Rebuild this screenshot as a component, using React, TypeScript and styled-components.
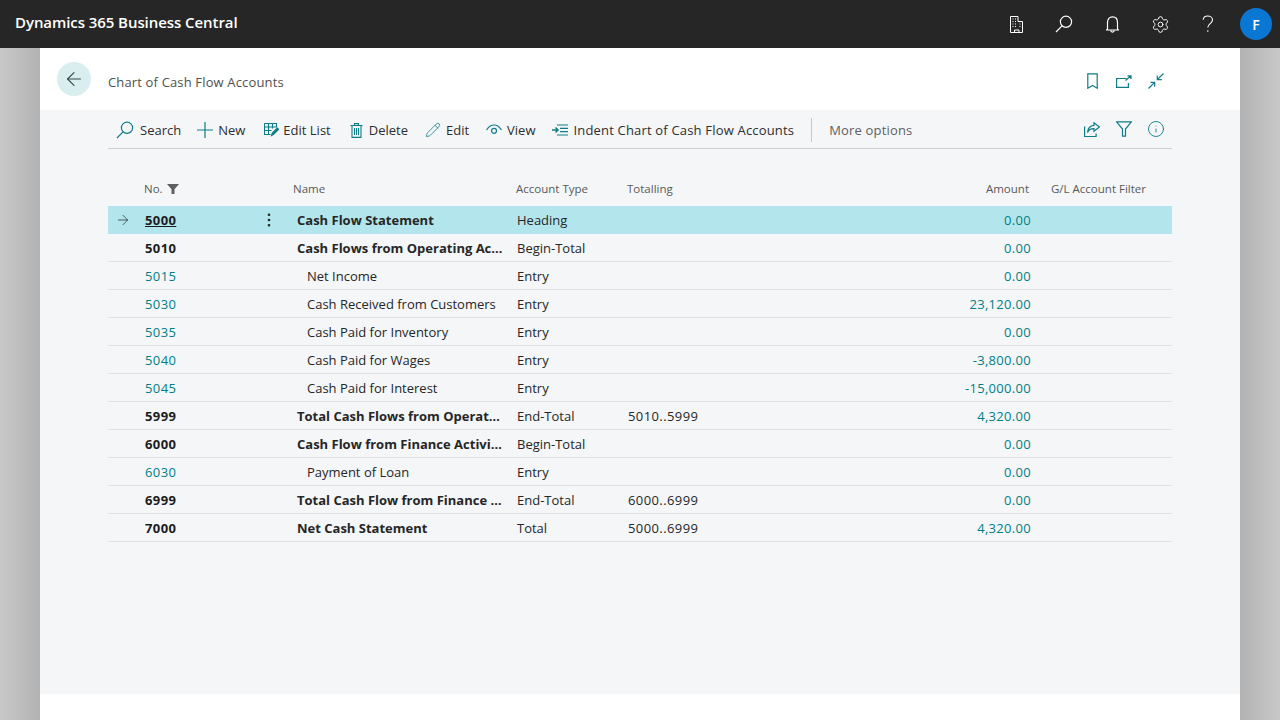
import styled, { createGlobalStyle } from 'styled-components';
import { ArrowLeft, ArrowRight, Settings, Pencil, Info, MoreVertical } from 'lucide-react';

const GlobalStyle = createGlobalStyle`
  html, body {
    margin: 0;
    padding: 0;
    height: 100%;
    overflow: hidden;
    font-family: "Open Sans", "Noto Sans", "Liberation Sans", sans-serif;
  }
  #root { height: 100%; }
  * { box-sizing: border-box; }
`;

const Page = styled.div`
  width: 1280px;
  height: 720px;
  display: flex;
  flex-direction: column;
`;

const TopBar = styled.header`
  height: 48px;
  flex: none;
  background: #262626;
  display: flex;
  align-items: center;
  padding: 0 8px 0 15px;
  color: #fff;
`;

const Brand = styled.div`
  flex: 1;
  margin-top: -4px;
  font-size: 15px;
  font-weight: 600;
  letter-spacing: -0.07px;
`;

const TopIcon = styled.div`
  width: 48px;
  height: 48px;
  display: flex;
  align-items: center;
  justify-content: center;
  color: #fff;
`;

const Avatar = styled.div`
  width: 32px;
  height: 32px;
  margin-left: 8px;
  border-radius: 50%;
  background: #0a78d2;
  color: #fff;
  font-size: 14px;
  font-weight: 600;
  display: flex;
  align-items: center;
  justify-content: center;
`;

const Stage = styled.div`
  flex: 1;
  display: flex;
  min-height: 0;
`;

const Side = styled.div<{ $flip?: boolean }>`
  width: 40px;
  background: linear-gradient(${({ $flip }) => ($flip ? '270deg' : '90deg')}, #c8c8c8 0%, #b2b2b2 100%);
`;

const Card = styled.main`
  flex: 1;
  background: #fff;
  display: flex;
  flex-direction: column;
`;

const TitleBand = styled.div`
  height: 62px;
  flex: none;
  display: flex;
  align-items: center;
  padding: 0 74px 0 17px;
`;

const BackButton = styled.div`
  width: 34px;
  height: 34px;
  border-radius: 50%;
  background: #d9eeee;
  color: #37474a;
  display: flex;
  align-items: center;
  justify-content: center;
`;

const PageTitle = styled.h1`
  flex: 1;
  margin: 6px 0 0 17px;
  font-size: 13px;
  font-weight: 400;
  letter-spacing: 0.15px;
  color: #505050;
`;

const TitleActions = styled.div`
  display: flex;
  align-items: center;
  gap: 12px;
  margin-top: 4px;
  color: #0f7c87;
`;

const TitleAction = styled.div`
  width: 20px;
  height: 20px;
  display: flex;
  align-items: center;
  justify-content: center;
`;

const Content = styled.div`
  flex: 1;
  background: #f4f6f8;
  padding: 0 68px;
  min-height: 0;
`;

const Toolbar = styled.div`
  height: 39px;
  display: flex;
  align-items: center;
  border-bottom: 1px solid #cdd0d2;
  padding: 2px 6px 0 8px;
`;

const ToolButton = styled.div<{ $gap?: number; $after?: number; $spread?: boolean }>`
  display: flex;
  align-items: center;
  gap: ${({ $gap }) => $gap ?? 5}px;
  margin-right: ${({ $after }) => $after ?? 17}px;
  font-size: 13px;
  letter-spacing: ${({ $spread }) => ($spread ? '0.18px' : '0')};
  white-space: nowrap;
  color: #2e2e2e;
  svg { color: #0f7c87; flex: none; }
`;

const ToolDivider = styled.div`
  width: 1px;
  height: 24px;
  background: #c4c7c9;
  margin-right: 17px;
`;

const MoreOptions = styled.div`
  flex: 1;
  font-size: 13px;
  letter-spacing: 0.17px;
  color: #5f5f5f;
`;

const ToolIcons = styled.div`
  display: flex;
  align-items: center;
  gap: 12px;
  margin-top: -2px;
  color: #0f7c87;
`;

const ToolIcon = styled.div`
  width: 20px;
  height: 20px;
  display: flex;
  align-items: center;
  justify-content: center;
`;

const Row = styled.div`
  display: grid;
  grid-template-columns: 36px 113px 36px 223px 111px 282px 122px 20px 121px;
  align-items: center;
`;

const HeadRow = styled(Row)`
  height: 39px;
  margin-top: 18px;
  padding-top: 4px;
  font-size: 11.5px;
  color: #595959;
`;

const HeadCell = styled.div<{ $right?: boolean }>`
  display: flex;
  align-items: center;
  justify-content: ${({ $right }) => ($right ? 'flex-end' : 'flex-start')};
  padding-right: ${({ $right }) => ($right ? '2px' : '0')};
  gap: 4px;
  white-space: nowrap;
`;

const DataRow = styled(Row)<{ $active?: boolean }>`
  height: 28px;
  font-size: 13px;
  color: #262626;
  background: ${({ $active }) => ($active ? '#b2e6ec' : 'transparent')};
  border-bottom: 1px solid ${({ $active }) => ($active ? '#b2e6ec' : '#dfe2e4')};
`;

const Marker = styled.div`
  display: flex;
  justify-content: center;
  padding-right: 7px;
  color: #2a3a3d;
`;

const NoCell = styled.div<{ $bold?: boolean; $active?: boolean }>`
  padding-left: 1px;
  letter-spacing: 0.4px;
  font-weight: ${({ $bold }) => ($bold ? 700 : 400)};
  color: ${({ $bold }) => ($bold ? '#1c1c1c' : '#007f87')};
  text-decoration: ${({ $active }) => ($active ? 'underline' : 'none')};
`;

const MenuCell = styled.div`
  display: flex;
  color: #262626;
  margin-left: 3px;
`;

const NameCell = styled.div<{ $bold?: boolean; $indent?: boolean }>`
  padding-left: ${({ $indent }) => ($indent ? '14px' : '4px')};
  padding-right: 13px;
  font-weight: ${({ $bold }) => ($bold ? 700 : 400)};
  white-space: nowrap;
  overflow: hidden;
  text-overflow: ellipsis;
`;

const PlainCell = styled.div<{ $spread?: boolean }>`
  padding-left: 1px;
  letter-spacing: ${({ $spread }) => ($spread ? '0.4px' : '0')};
  white-space: nowrap;
`;

const AmountCell = styled.div`
  text-align: right;
  letter-spacing: 0.3px;
  color: #007f87;
`;

const Footer = styled.div`
  height: 26px;
  flex: none;
  background: #fff;
`;

const thin = { strokeWidth: 1.2 };

const SearchGlyph = ({ size = 18 }: { size?: number }) => (
  <svg width={size} height={size} viewBox="0 0 18 18" fill="none" stroke="currentColor" strokeWidth="1.2">
    <circle cx="11" cy="6.800" r="5.600" />
    <path d="M7 10.800 1 17" />
  </svg>
);

const BuildingGlyph = () => (
  <svg width="13" height="17" viewBox="0 0 13 17" fill="none" stroke="currentColor" strokeWidth="1">
    <path d="M.5 16.500V.5h7.500v5h4.500v11z" />
    <path d="M4.500 16.500v-2.500h4.500v2.500" />
    <path d="M2.500 3h1M5 3h1M2.500 5.500h1M5 5.500h1M2.500 8h1M5 8h1M2.500 10.500h1M5 10.500h1M9.500 8h1M9.500 10.500h1" />
  </svg>
);

const BellGlyph = () => (
  <svg width="13" height="17" viewBox="0 0 13 17" fill="none" stroke="currentColor" strokeWidth="1.2">
    <path d="M1.500 13V6.500C1.500 3 3.500.8 6.500.8s5 2.200 5 5.700V13l1 1H.5z" />
    <path d="M4.800 14.300c0 2.400 3.400 2.400 3.400 0" />
  </svg>
);

const HelpGlyph = () => (
  <svg width="12" height="18" viewBox="0 0 12 18" fill="none" stroke="currentColor" strokeWidth="1.100">
    <path d="M1.200 4.800C1.400 2.400 3.300 1 5.700 1c2.700 0 4.800 1.600 4.800 4 0 3.600-4.700 3.600-4.700 7.500" />
    <circle cx="5.800" cy="16" r=".8" fill="currentColor" stroke="none" />
  </svg>
);

const BookmarkGlyph = () => (
  <svg width="11" height="16" viewBox="0 0 11 16" fill="none" stroke="currentColor" strokeWidth="1.200">
    <path d="M.8.8h9.400v14.400L5.500 12.500.8 15.200z" />
  </svg>
);

const OpenNewGlyph = () => (
  <svg width="16" height="13" viewBox="0 0 16 13" fill="none" stroke="currentColor" strokeWidth="1.200">
    <path d="M10.500 3.500H.6v8.800h11.800V8" />
    <path d="M9.500 5.500 15 .8M11.500.8h3.500V4" />
  </svg>
);

const CollapseGlyph = () => (
  <svg width="16" height="16" viewBox="0 0 16 16" fill="none" stroke="currentColor" strokeWidth="1.200">
    <path d="M15.500.5 9.300 6.700M9.300 2.500v4.200h4.500" />
    <path d="M.5 15.500 6.700 9.300M2.500 9.300h4.200v4.500" />
  </svg>
);

const PlusGlyph = () => (
  <svg width="16" height="16" viewBox="0 0 16 16" fill="none" stroke="currentColor" strokeWidth="1.200">
    <path d="M8 0v16M0 8h16" />
  </svg>
);

const EditListGlyph = () => (
  <svg width="15" height="14" viewBox="0 0 15 14" fill="none" stroke="currentColor" strokeWidth="1.100">
    <path d="M.5.5h12v4M.5.5v11h6M.5 4h12M.5 7.500h7M4.500.5v11M8.500.5v5" />
    <path d="M7.500 12.500 8.300 10l5-5 1.300 1.300-5 5z" fill="currentColor" />
  </svg>
);

const TrashGlyph = () => (
  <svg width="13" height="15" viewBox="0 0 13 15" fill="none" stroke="currentColor" strokeWidth="1.100">
    <path d="M.5 2.500h12M4.500 2.500V.6h4v1.900" />
    <path d="M2 2.500v11.900h9V2.500" />
    <path d="M4.500 5v7M6.500 5v7M8.500 5v7" />
  </svg>
);

const EyeGlyph = () => (
  <svg width="16" height="12" viewBox="0 0 16 12" fill="none" stroke="currentColor" strokeWidth="1.200">
    <path d="M.6 6C2.500 2.600 5 1 8 1s5.500 1.600 7.400 5" />
    <circle cx="8" cy="6.800" r="2.500" />
  </svg>
);

const IndentGlyph = () => (
  <svg width="16" height="12" viewBox="0 0 16 12" fill="none" stroke="currentColor" strokeWidth="1.200">
    <path d="M5 1h11M8 4.300h8M8 7.600h8M5 11h11" />
    <path d="M0 6h6M3.500 3.500 6 6 3.500 8.500" strokeWidth="1.500" />
  </svg>
);

const ShareGlyph = () => (
  <svg width="16" height="15" viewBox="0 0 16 15" fill="none" stroke="currentColor" strokeWidth="1.200">
    <path d="M.6 4.500v10h11.500v-3" />
    <path d="M10 .8 15.400 5 10 9.200V6.700C7 6.500 5 7.600 3.500 10.500 3.800 6.400 6 3.700 10 3.300z" />
  </svg>
);

const FunnelGlyph = () => (
  <svg width="16" height="16" viewBox="0 0 16 16" fill="none" stroke="currentColor" strokeWidth="1.200">
    <path d="M.6.8h14.800L9.500 8v7.200h-3V8z" />
  </svg>
);

const SolidFunnel = () => (
  <svg width="12" height="10" viewBox="0 0 12 10" fill="#5f5f5f">
    <path d="M0 0h12L7.500 5.200V10h-3V5.200z" />
  </svg>
);

type Account = {
  no: string;
  name: string;
  type: string;
  totalling?: string;
  amount: string;
  bold?: boolean;
};

const accounts: Account[] = [
  { no: '5000', name: 'Cash Flow Statement', type: 'Heading', amount: '0.00', bold: true },
  { no: '5010', name: 'Cash Flows from Operating Activities', type: 'Begin-Total', amount: '0.00', bold: true },
  { no: '5015', name: 'Net Income', type: 'Entry', amount: '0.00' },
  { no: '5030', name: 'Cash Received from Customers', type: 'Entry', amount: '23,120.00' },
  { no: '5035', name: 'Cash Paid for Inventory', type: 'Entry', amount: '0.00' },
  { no: '5040', name: 'Cash Paid for Wages', type: 'Entry', amount: '-3,800.00' },
  { no: '5045', name: 'Cash Paid for Interest', type: 'Entry', amount: '-15,000.00' },
  { no: '5999', name: 'Total Cash Flows from Operating Activities', type: 'End-Total', totalling: '5010..5999', amount: '4,320.00', bold: true },
  { no: '6000', name: 'Cash Flow from Finance Activities', type: 'Begin-Total', amount: '0.00', bold: true },
  { no: '6030', name: 'Payment of Loan', type: 'Entry', amount: '0.00' },
  { no: '6999', name: 'Total Cash Flow from Finance Activities', type: 'End-Total', totalling: '6000..6999', amount: '0.00', bold: true },
  { no: '7000', name: 'Net Cash Statement', type: 'Total', totalling: '5000..6999', amount: '4,320.00', bold: true },
];

export default function App() {
  return (
    <Page>
      <GlobalStyle />
      <TopBar>
        <Brand>Dynamics 365 Business Central</Brand>
        <TopIcon><BuildingGlyph /></TopIcon>
        <TopIcon><SearchGlyph /></TopIcon>
        <TopIcon><BellGlyph /></TopIcon>
        <TopIcon><Settings size={19} {...thin} /></TopIcon>
        <TopIcon><HelpGlyph /></TopIcon>
        <Avatar>F</Avatar>
      </TopBar>
      <Stage>
        <Side />
        <Card>
          <TitleBand>
            <BackButton><ArrowLeft size={22} {...thin} /></BackButton>
            <PageTitle>Chart of Cash Flow Accounts</PageTitle>
            <TitleActions>
              <TitleAction><BookmarkGlyph /></TitleAction>
              <TitleAction><OpenNewGlyph /></TitleAction>
              <TitleAction><CollapseGlyph /></TitleAction>
            </TitleActions>
          </TitleBand>
          <Content>
            <Toolbar>
              <ToolButton $gap={6} $after={16}><SearchGlyph /> Search</ToolButton>
              <ToolButton $after={19}><PlusGlyph /> New</ToolButton>
              <ToolButton $gap={4} $after={19}><EditListGlyph /> Edit List</ToolButton>
              <ToolButton $gap={6}><TrashGlyph /> Delete</ToolButton>
              <ToolButton><Pencil size={16} {...thin} /> Edit</ToolButton>
              <ToolButton><EyeGlyph /> View</ToolButton>
              <ToolButton $after={17} $spread><IndentGlyph /> Indent Chart of Cash Flow Accounts</ToolButton>
              <ToolDivider />
              <MoreOptions>More options</MoreOptions>
              <ToolIcons>
                <ToolIcon><ShareGlyph /></ToolIcon>
                <ToolIcon><FunnelGlyph /></ToolIcon>
                <ToolIcon><Info size={18} {...thin} /></ToolIcon>
              </ToolIcons>
            </Toolbar>
            <HeadRow>
              <span />
              <HeadCell>No. <SolidFunnel /></HeadCell>
              <span />
              <HeadCell>Name</HeadCell>
              <HeadCell>Account Type</HeadCell>
              <HeadCell>Totalling</HeadCell>
              <HeadCell $right>Amount</HeadCell>
              <span />
              <HeadCell>G/L Account Filter</HeadCell>
            </HeadRow>
            {accounts.map((a, i) => (
              <DataRow key={a.no} $active={i === 0}>
                <Marker>{i === 0 && <ArrowRight size={16} {...thin} />}</Marker>
                <NoCell $bold={a.bold} $active={i === 0}>{a.no}</NoCell>
                <MenuCell>{i === 0 && <MoreVertical size={18} strokeWidth={1.6} />}</MenuCell>
                <NameCell $bold={a.bold} $indent={!a.bold}>{a.name}</NameCell>
                <PlainCell>{a.type}</PlainCell>
                <PlainCell $spread>{a.totalling}</PlainCell>
                <AmountCell>{a.amount}</AmountCell>
                <span />
                <span />
              </DataRow>
            ))}
          </Content>
          <Footer />
        </Card>
        <Side $flip />
      </Stage>
    </Page>
  );
}
